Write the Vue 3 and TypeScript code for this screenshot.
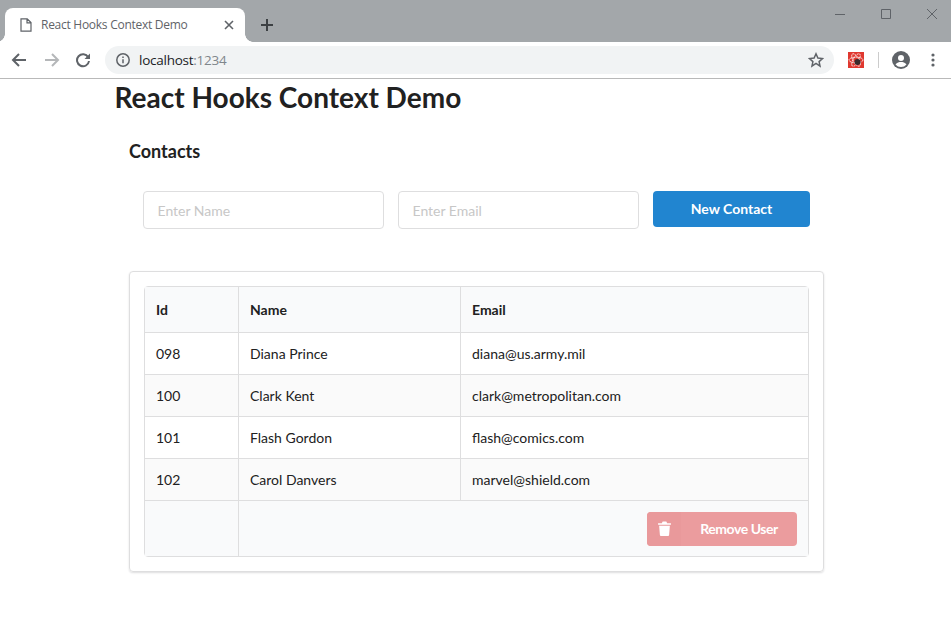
<script setup lang="ts">
interface Contact { id: string; name: string; email: string }
const contacts: Contact[] = [
  { id: '098', name: 'Diana Prince', email: 'diana@us.army.mil' },
  { id: '100', name: 'Clark Kent', email: 'clark@metropolitan.com' },
  { id: '101', name: 'Flash Gordon', email: 'flash@comics.com' },
  { id: '102', name: 'Carol Danvers', email: 'marvel@shield.com' },
]
</script>

<template>
  <div class="browser">
    <header class="tabbar">
      <div class="tab">
        <svg class="doc" width="12" height="14" viewBox="0 0 12 14" fill="none" stroke="#5f6368" stroke-width="1.2">
          <path d="M1 .8h6.200L11 4.600v8.600H1zM7 .8v4h4" />
        </svg>
        <span class="tab-title">React Hooks Context Demo</span>
        <svg class="tab-close" width="10" height="10" viewBox="0 0 10 10" stroke="#5f6368" stroke-width="1.6">
          <path d="M1 1l8 8M9 1l-8 8" />
        </svg>
      </div>
      <svg class="newtab" width="12" height="12" viewBox="0 0 12 12" stroke="#3c4043" stroke-width="2">
        <path d="M6 0v12M0 6h12" />
      </svg>
      <div class="winctl">
        <svg width="12" height="12" viewBox="0 0 12 12" stroke="#5f6368"><path d="M1 6.500h10" /></svg>
        <svg width="12" height="12" viewBox="0 0 12 12" fill="none" stroke="#5f6368"><path d="M1.500 1.500h9v9h-9z" /></svg>
        <svg width="12" height="12" viewBox="0 0 12 12" stroke="#5f6368"><path d="M1 1l10 10M11 1L1 11" /></svg>
      </div>
    </header>
    <nav class="toolbar">
      <svg class="nav" width="16" height="16" viewBox="0 0 16 16" fill="none" stroke="#5f6368" stroke-width="2"><path d="M15 8H2M8 2L2 8l6 6" /></svg>
      <svg class="nav" width="16" height="16" viewBox="0 0 16 16" fill="none" stroke="#b5b7b9" stroke-width="2"><path d="M1 8h13M8 2l6 6-6 6" /></svg>
      <svg class="nav reload" width="16" height="16" viewBox="0 0 16 16" fill="none"><path d="M13.200 5.200A6 6 0 1 0 14 9" stroke="#5f6368" stroke-width="2" /><path d="M15 1.500V7H9.500z" fill="#5f6368" /></svg>
      <div class="omnibox">
        <svg width="16" height="16" viewBox="0 0 16 16" fill="none" stroke="#5f6368" stroke-width="1.5">
          <circle cx="8" cy="8" r="6.200" /><path d="M8 7.200v4M8 4.400v1.600" />
        </svg>
        <span class="url">localhost<span class="port">:1234</span></span>
        <svg class="star" width="16" height="16" viewBox="0 0 16 16" fill="none" stroke="#5f6368" stroke-width="1.5">
          <path d="M8 1.800l1.900 4.200 4.600.5-3.400 3.100.9 4.500L8 11.300l-4 2.800.9-4.500L1.500 6.500l4.600-.5z" />
        </svg>
      </div>
      <svg class="ext" width="16" height="16" viewBox="0 0 16 16" fill="none">
        <rect width="16" height="16" fill="#e0382f" />
        <g stroke="#fff" stroke-width=".8" stroke-dasharray="2 .6">
          <ellipse cx="8" cy="8" rx="7" ry="2.800" />
          <ellipse cx="8" cy="8" rx="7" ry="2.800" transform="rotate(60 8 8)" />
          <ellipse cx="8" cy="8" rx="7" ry="2.800" transform="rotate(120 8 8)" />
        </g>
        <circle cx="9.500" cy="10" r="3" fill="#3a2a2a" />
      </svg>
      <span class="sep"></span>
      <svg class="avatar" width="18" height="18" viewBox="0 0 18 18">
        <circle cx="9" cy="9" r="9" fill="#5f6368" />
        <circle cx="9" cy="7" r="3" fill="#fff" />
        <path d="M3.500 13.400C5 11.400 7 11 9 11s4 .4 5.500 2.400A7 7 0 0 1 9 16a7 7 0 0 1-5.500-2.600z" fill="#fff" />
      </svg>
      <svg class="menu" width="4" height="14" viewBox="0 0 4 14" fill="#5f6368">
        <circle cx="2" cy="2" r="1.600" /><circle cx="2" cy="7" r="1.600" /><circle cx="2" cy="12" r="1.600" />
      </svg>
    </nav>

    <main class="page">
      <h1 class="title">React Hooks Context Demo</h1>
      <section class="contacts">
        <h3 class="subtitle">Contacts</h3>
        <form class="form" @submit.prevent>
          <input class="field" type="text" placeholder="Enter Name" />
          <input class="field" type="text" placeholder="Enter Email" />
          <button class="btn-new" type="submit">New Contact</button>
        </form>
        <div class="card">
          <table class="grid">
            <colgroup>
              <col class="c-id" /><col class="c-name" /><col />
            </colgroup>
            <thead>
              <tr><th>Id</th><th>Name</th><th>Email</th></tr>
            </thead>
            <tbody>
              <tr v-for="c in contacts" :key="c.id">
                <td>{{ c.id }}</td><td>{{ c.name }}</td><td>{{ c.email }}</td>
              </tr>
            </tbody>
            <tfoot>
              <tr>
                <td></td>
                <td colspan="2" class="foot-cell">
                  <button class="btn-remove" type="button">
                    <span class="btn-icon">
                      <svg width="13" height="15" viewBox="0 0 12 14" fill="#fff">
                        <path d="M0 2h3.500L4.300.5h3.400L8.500 2H12v1.500H0zM1 4.500h10l-.7 8.600a1 1 0 0 1-1 .9H2.700a1 1 0 0 1-1-.9z" />
                      </svg>
                    </span>
                    <span class="btn-label">Remove User</span>
                  </button>
                </td>
              </tr>
            </tfoot>
          </table>
        </div>
      </section>
    </main>
  </div>
</template>

<style scoped>
.browser { width: 951px; height: 637px; overflow: hidden; background: #fff; font-family: Lato, "Liberation Sans", sans-serif; color: #212121; }

.tabbar { height: 42px; background: #a3a7aa; display: flex; align-items: flex-end; position: relative; box-sizing: border-box; padding-left: 5px; }
.tab { width: 240px; height: 34px; background: #fff; border-radius: 8px 8px 0 0; display: flex; align-items: center; box-sizing: border-box; padding: 0 0 1px 15px; position: relative; }
.tab::before, .tab::after { content: ""; position: absolute; bottom: 0; width: 8px; height: 8px; }
.tab::before { left: -8px; background: radial-gradient(circle at 0 0, transparent 7.500px, #fff 8px); }
.tab::after { right: -8px; background: radial-gradient(circle at 100% 0, transparent 7.500px, #fff 8px); }
.tab-title { font: 12px "Open Sans", "Liberation Sans", sans-serif; color: #5f6368; margin-left: 9px; flex: 1; letter-spacing: -0.27px; }
.tab-close { margin-right: 11px; }
.newtab { margin: 0 0 11px 16px; }
.winctl { position: absolute; top: 8px; right: 13px; display: flex; gap: 34px; }

.toolbar { height: 37px; box-sizing: border-box; border-bottom: 1px solid #b9b9b9; display: flex; align-items: center; padding: 0 0 1px 11px; background: #fff; }
.nav { margin-right: 17px; }
.reload { margin-left: -2px; margin-right: 14px; }
.omnibox { width: 729px; height: 28px; border-radius: 14px; background: #f1f3f4; display: flex; align-items: center; box-sizing: border-box; padding: 0 10px; }
.url { font: 13.500px "Open Sans", "Liberation Sans", sans-serif; color: #202124; margin-left: 8px; flex: 1; letter-spacing: -0.25px; }
.port { color: #80868b; }
.ext { margin-left: 14px; }
.sep { width: 1px; height: 16px; background: #ccc; margin-left: 14px; }
.avatar { margin-left: 13px; }
.menu { margin-left: 21px; }

.page { margin-left: 114px; width: 724px; }
.title { margin: 0; padding-left: 0.5px; font-size: 28px; line-height: 36px; font-weight: 700; color: #212121; }
.contacts { padding: 0 15px; }
.subtitle { margin: 0; padding-top: 25px; font-size: 18px; line-height: 22px; font-weight: 700; color: #212121; }
.form { display: flex; align-items: flex-start; gap: 14px; padding: 29px 0 0 14px; height: 80px; }
.field { flex: none; width: 241px; height: 38px; box-sizing: border-box; border: 1px solid #dededf; border-radius: 4px; padding: 1px 13.500px 0; font: 14px Lato, sans-serif; outline: none; }
.field::placeholder { color: #c7c7c7; opacity: 1; }
.btn-new { flex: none; width: 157px; height: 36px; border: 0; border-radius: 4px; background: #2185d0; color: #fff; font: 700 14px Lato, sans-serif; padding: 0 0 1px; }

.card { width: 695px; height: 301px; box-sizing: border-box; border: 1px solid #dededf; border-radius: 4px; padding: 14px; box-shadow: 0 1px 2px rgba(34,36,38,.15); }
.grid { width: 665px; height: 271px; border-collapse: separate; border-spacing: 0; border: 1px solid #dededf; border-radius: 4px; table-layout: fixed; font-size: 14px; color: #212121; background: #fff; }
.c-id { width: 93px; }
.c-name { width: 222px; }
th, td { box-sizing: border-box; padding: 0 11px; text-align: left; border-left: 1px solid #dededf; border-top: 1px solid #dededf; }
th:first-child, td:first-child { border-left: 0; }
th { height: 45px; background: #f9fafb; border-top: 0; font-weight: 700; }
tbody td { height: 42px; }
tbody tr:nth-child(even) td { background: #fafafa; }
tfoot td { background: #f9fafb; height: 56px; }
.foot-cell { text-align: right; }
.btn-remove { display: inline-flex; vertical-align: middle; width: 150px; height: 34px; border: 0; padding: 0; border-radius: 4px; background: #eb9c9e; color: #fff; font: 700 14px Lato, sans-serif; overflow: hidden; align-items: center; }
.btn-icon { width: 34px; height: 34px; background: #e9999b; display: flex; align-items: center; justify-content: center; }
.btn-label { flex: 1; text-align: center; letter-spacing: -0.45px; }
</style>
